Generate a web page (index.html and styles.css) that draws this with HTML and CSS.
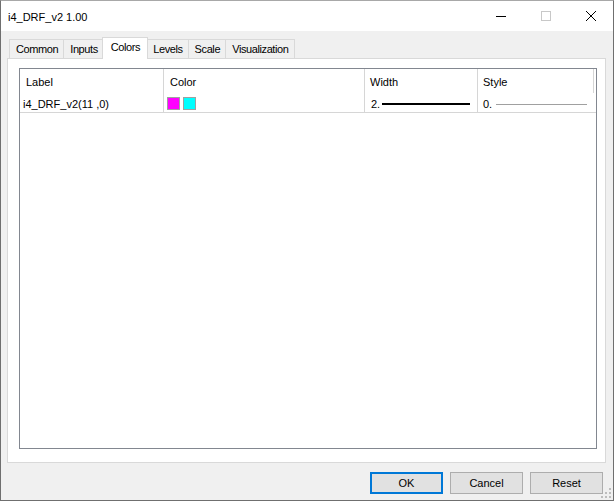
FILE: index.html
```html
<!DOCTYPE html>
<html>
<head>
<meta charset="utf-8">
<title>i4_DRF_v2 1.00</title>
<link rel="stylesheet" href="styles.css">
</head>
<body>
<div class="window">
  <header class="titlebar">
    <span class="title">i4_DRF_v2 1.00</span>
    <div class="caption">
      <span class="cap-btn"><svg width="10" height="10" viewBox="0 0 10 10"><line x1="0" y1="5.5" x2="10" y2="5.5" stroke="#000" stroke-width="1"/></svg></span>
      <span class="cap-btn"><svg width="10" height="10" viewBox="0 0 10 10"><rect x="0.5" y="0.5" width="9" height="9" fill="none" stroke="#c8c8c8" stroke-width="1"/></svg></span>
      <span class="cap-btn"><svg width="10" height="10" viewBox="0 0 10 10"><path d="M0 0 L10 10 M10 0 L0 10" stroke="#000" stroke-width="1"/></svg></span>
    </div>
  </header>
  <main class="content">
    <nav class="tabs">
      <span class="tab">Common</span>
      <span class="tab">Inputs</span>
      <span class="tab active">Colors</span>
      <span class="tab">Levels</span>
      <span class="tab">Scale</span>
      <span class="tab">Visualization</span>
    </nav>
    <section class="panel">
      <div class="list">
        <div class="row head">
          <div class="cell c-label">Label</div>
          <div class="cell c-color">Color</div>
          <div class="cell c-width">Width</div>
          <div class="cell c-style">Style</div>
        </div>
        <div class="row data">
          <div class="cell c-label">i4_DRF_v2(11 ,0)</div>
          <div class="cell c-color">
            <span class="swatch magenta"></span><span class="swatch cyan"></span>
          </div>
          <div class="cell c-width"><span>2.</span><span class="line-thick"></span></div>
          <div class="cell c-style"><span>0.</span><span class="line-thin"></span></div>
        </div>
      </div>
    </section>
    <footer class="actions">
      <button class="btn default">OK</button>
      <button class="btn">Cancel</button>
      <button class="btn">Reset</button>
    </footer>
  </main>
  <svg class="grip" width="11" height="11" viewBox="0 0 11 11">
    <rect x="8" y="0" width="2" height="2" fill="#bdbdbd"/>
    <rect x="4" y="4" width="2" height="2" fill="#bdbdbd"/>
    <rect x="8" y="4" width="2" height="2" fill="#bdbdbd"/>
    <rect x="0" y="8" width="2" height="2" fill="#bdbdbd"/>
    <rect x="4" y="8" width="2" height="2" fill="#bdbdbd"/>
    <rect x="8" y="8" width="2" height="2" fill="#bdbdbd"/>
  </svg>
</div>
</body>
</html>
```

FILE: styles.css
```css
html, body {
  margin: 0;
  padding: 0;
  background: #ffffff;
}

body {
  font-family: "Liberation Sans", Arial, sans-serif;
  font-size: 11px;
  color: #000;
}

.window {
  position: relative;
  width: 614px;
  height: 501px;
  box-sizing: border-box;
  border: 1px solid #6f6f6f;
  border-top-color: #a8a8a8;
  background: #f0f0f0;
  display: flex;
  flex-direction: column;
}

.titlebar {
  height: 30px;
  flex: none;
  background: #ffffff;
  display: flex;
  align-items: center;
}

.title {
  padding-left: 7px;
  font-size: 11px;
  padding-top: 1px;
}

.caption {
  margin-left: auto;
  display: flex;
  height: 30px;
}

.cap-btn {
  width: 45px;
  height: 30px;
  display: flex;
  align-items: center;
  justify-content: center;
}

.content {
  flex: 1;
  display: flex;
  flex-direction: column;
  padding: 0 7px 0 6px;
  min-height: 0;
}

.tabs {
  margin-top: 6px;
  height: 21px;
  flex: none;
  display: flex;
  align-items: flex-end;
  padding-left: 2px;
}

.tab {
  height: 19px;
  box-sizing: border-box;
  border: 1px solid #d9d9d9;
  border-bottom: none;
  margin-left: -1px;
  padding: 1px 5px 0 6px;
  line-height: 17px;
  letter-spacing: -0.4px;
  background: #f0f0f0;
}

.tab:first-child {
  margin-left: 0;
}

.tab.active {
  position: relative;
  z-index: 1;
  height: 22px;
  margin: 0 -2px -1px -2px;
  padding: 0 7px 0 8px;
  line-height: 19px;
  background: #ffffff;
}

.tab.active + .tab {
  margin-left: 0;
}

.panel {
  flex: 1;
  min-height: 0;
  background: #ffffff;
  border: 1px solid #d9d9d9;
  display: flex;
  flex-direction: column;
  padding: 9px 8px 13px 11px;
}

.list {
  flex: 1;
  border: 1px solid #828790;
  background: #ffffff;
}

.row {
  display: flex;
}

.cell {
  box-sizing: border-box;
  border-right: 1px solid #d6d6d6;
  white-space: nowrap;
}

.c-label { width: 144px; }
.c-color { width: 201px; }
.c-width { width: 113px; }
.c-style { width: 116px; }

.head .cell {
  height: 24px;
  padding: 2px 0 0 6px;
  line-height: 22px;
}

.head .c-width { padding-left: 5px; }
.head .c-style { padding-left: 5px; }

.data {
  border-bottom: 1px solid #d6d6d6;
}

.data .cell {
  height: 19px;
  padding: 3px 0 0 3px;
  line-height: 16px;
}

.data .c-style {
  border-right: none;
}

.data .c-color {
  display: flex;
  gap: 3px;
  padding-top: 4px;
}

.swatch {
  width: 13px;
  height: 13px;
  box-sizing: border-box;
  border: 1px solid #a0a0a0;
}

.swatch.magenta { background: #ff00ff; }
.swatch.cyan { background: #00ffff; }

.data .c-width,
.data .c-style {
  display: flex;
  align-items: flex-start;
}

.data .c-width { padding-left: 6px; }
.data .c-style { padding-left: 5px; }

.line-thick {
  width: 88px;
  height: 2px;
  background: #000;
  margin: 7px 0 0 2px;
}

.line-thin {
  width: 91px;
  height: 1px;
  background: #a0a0a0;
  margin: 8px 0 0 4px;
}

.actions {
  flex: none;
  height: 37px;
  box-sizing: border-box;
  padding: 9px 3px 6px 0;
  display: flex;
  justify-content: flex-end;
  gap: 7px;
}

.btn {
  width: 73px;
  height: 22px;
  box-sizing: border-box;
  margin: 0;
  padding: 0;
  border: 1px solid #adadad;
  background: #e1e1e1;
  font-family: "Liberation Sans", Arial, sans-serif;
  font-size: 11px;
  color: #000;
}

.btn.default {
  border: 2px solid #0078d7;
}

.grip {
  position: absolute;
  right: 1px;
  bottom: 1px;
}
```
